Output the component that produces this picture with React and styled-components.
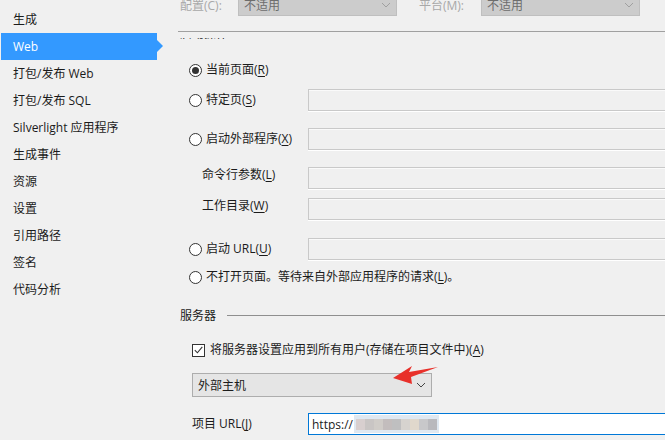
import React from 'react';
import styled, { createGlobalStyle, css } from 'styled-components';

const GlobalStyle = createGlobalStyle`
  html, body { margin: 0; padding: 0; background: #f0f0f0; }
  body {
    font-family: "Open Sans", "Noto Sans CJK SC", sans-serif;
    font-size: 12px;
    color: #1b1b1b;
  }
  u { text-underline-offset: 2px; }
`;

const Window = styled.div`
  position: relative;
  display: flex;
  width: 665px;
  height: 440px;
  overflow: hidden;
  background: #f0f0f0;
`;

const Sidebar = styled.ul`
  flex: none;
  width: 163px;
  margin: 0;
  padding: 6px 0 0;
  list-style: none;
`;

const NavItem = styled.li`
  position: relative;
  box-sizing: border-box;
  width: 156px;
  height: 27px;
  margin-left: 1px;
  padding-left: 12px;
  line-height: 27px;
  white-space: nowrap;
  ${p => p.$active && css`
    background: #3399ff;
    color: #fff;
    &::after {
      content: '';
      position: absolute;
      right: -6px;
      top: 7px;
      border-top: 6px solid transparent;
      border-bottom: 6px solid transparent;
      border-left: 6px solid #3399ff;
    }
  `}
`;

const Main = styled.div`
  flex: 1;
  min-width: 0;
  display: flex;
  flex-direction: column;
`;

const ConfigBar = styled.div`
  display: flex;
  align-items: center;
  height: 22px;
  margin-top: -6px;
  padding-left: 17px;
`;

const ConfigLabel = styled.span`
  flex: none;
  width: ${p => p.$w}px;
  color: #a8a8a8;
`;

const Select = styled.div`
  flex: none;
  box-sizing: border-box;
  display: flex;
  align-items: center;
  justify-content: space-between;
  width: ${p => p.$w}px;
  height: ${p => p.$h || 22}px;
  margin-right: ${p => p.$mr || 0}px;
  padding: 0 5px 0 5px;
  border: 1px solid ${p => (p.$disabled ? '#bfbfbf' : '#adadad')};
  background: ${p => (p.$disabled ? '#cccccc' : '#e5e5e5')};
  color: ${p => (p.$disabled ? '#6d6d6d' : '#1b1b1b')};
`;

const Separator = styled.div`
  height: 1px;
  margin: 15px 0 6px 15px;
  background: #a0a0a0;
`;

const Viewport = styled.div`
  flex: 1;
  overflow: hidden;
`;

const Content = styled.div`
  width: 620px;
  margin-top: -12px;
`;

const GroupLabel = styled.div`
  height: 16px;
  line-height: 16px;
  padding-left: 17px;
`;

const Row = styled.div`
  display: flex;
  align-items: ${p => (p.$top ? 'flex-start' : 'center')};
  height: ${p => p.$h || 22}px;
  margin-top: ${p => p.$mt || 0}px;
  padding-left: ${p => p.$indent}px;
  white-space: nowrap;
`;

const FieldLabel = styled.label`
  flex: none;
  display: flex;
  align-items: center;
  gap: ${p => p.$gap || 4}px;
  width: ${p => (p.$w ? `${p.$w}px` : 'auto')};
  line-height: 16px;
`;

const Radio = styled.span`
  flex: none;
  box-sizing: border-box;
  display: flex;
  align-items: center;
  justify-content: center;
  width: 13px;
  height: 13px;
  border: 1px solid #333;
  border-radius: 50%;
  background: #fff;
  &::after {
    content: '';
    display: ${p => (p.$checked ? 'block' : 'none')};
    width: 7px;
    height: 7px;
    border-radius: 50%;
    background: #333;
  }
`;

const Checkbox = styled.span`
  flex: none;
  box-sizing: border-box;
  display: flex;
  align-items: center;
  justify-content: center;
  width: 13px;
  height: 13px;
  border: 1px solid #333;
  background: #fff;
`;

const TextBox = styled.div`
  flex: 1;
  box-sizing: border-box;
  display: flex;
  align-items: center;
  height: 22px;
  padding-left: 3px;
  border: 1px solid ${p => (p.$focused ? '#0078d7' : '#c9c9c9')};
  background: ${p => (p.$focused ? '#fff' : '#f0f0f0')};
  box-shadow: ${p => (p.$focused ? 'none' : '0 1px 0 #fff, inset 0 1px 0 #fafafa')};
`;

const SectionRow = styled.div`
  display: flex;
  align-items: center;
  height: 20px;
  margin-top: 17px;
  padding-left: 17px;
`;

const SectionLine = styled.div`
  flex: 1;
  height: 1px;
  margin-left: 11px;
  background: #8f8f8f;
`;

const Mosaic = styled.span`
  display: flex;
  align-items: center;
  height: 18px;
  margin-left: 1px;
  padding: 0 2px;
  background: #dfe8f1;
`;

const Tile = styled.span`
  width: 9px;
  height: 11px;
  background: ${p => p.$c};
`;

const Annotation = styled.svg`
  position: absolute;
  left: 0;
  top: 0;
  pointer-events: none;
`;

const Chevron = ({ color = '#444' }) => (
  <svg width="10" height="6" viewBox="0 0 10 6">
    <path d="M1 1 L5 5 L9 1" fill="none" stroke={color} strokeWidth="1" />
  </svg>
);

const navItems = ['生成', 'Web', '打包/发布 Web', '打包/发布 SQL', 'Silverlight 应用程序',
  '生成事件', '资源', '设置', '引用路径', '签名', '代码分析'];

const tiles = ['#d8cfcf', '#c9c5c4', '#d0ccc8', '#c3bdbd', '#bfbfc0', '#d6d3cf', '#e0d8cc', '#c8c8ca', '#b9b9bd'];

export default function App() {
  return (
    <Window>
      <GlobalStyle />
      <Sidebar>
        {navItems.map(item => (
          <NavItem key={item} $active={item === 'Web'}>{item}</NavItem>
        ))}
      </Sidebar>

      <Main>
        <ConfigBar>
          <ConfigLabel $w={58}>配置(C):</ConfigLabel>
          <Select $w={159} $mr={22} $disabled>不适用<Chevron color="#a0a0a0" /></Select>
          <ConfigLabel $w={62}>平台(M):</ConfigLabel>
          <Select $w={159} $disabled>不适用<Chevron color="#a0a0a0" /></Select>
        </ConfigBar>
        <Separator />

        <Viewport>
          <Content>
            <GroupLabel>启动操作</GroupLabel>

            <Row $mt={17} $indent={26}>
              <FieldLabel $w={119}><Radio $checked /><span>当前页面(<u>R</u>)</span></FieldLabel>
            </Row>
            <Row $mt={8} $indent={26}>
              <FieldLabel $w={119}><Radio /><span>特定页(<u>S</u>)</span></FieldLabel>
              <TextBox />
            </Row>
            <Row $mt={17} $indent={26}>
              <FieldLabel $w={119}><Radio /><span>启动外部程序(<u>X</u>)</span></FieldLabel>
              <TextBox />
            </Row>
            <Row $mt={17} $indent={39} $top>
              <FieldLabel $w={106}><span>命令行参数(<u>L</u>)</span></FieldLabel>
              <TextBox />
            </Row>
            <Row $mt={9} $indent={39} $top>
              <FieldLabel $w={106}><span>工作目录(<u>W</u>)</span></FieldLabel>
              <TextBox />
            </Row>
            <Row $mt={18} $indent={26}>
              <FieldLabel $w={119}><Radio /><span>启动 URL(<u>U</u>)</span></FieldLabel>
              <TextBox />
            </Row>
            <Row $mt={6} $indent={26}>
              <FieldLabel><Radio /><span>不打开页面。等待来自外部应用程序的请求(<u>L</u>)。</span></FieldLabel>
            </Row>

            <SectionRow>
              服务器
              <SectionLine />
            </SectionRow>

            <Row $mt={14} $indent={29}>
              <FieldLabel $gap={5}>
                <Checkbox>
                  <svg width="9" height="8" viewBox="0 0 9 8">
                    <path d="M0.8 4.2 L3.4 6.8 L8.3 0.8" fill="none" stroke="#333" strokeWidth="1.1" />
                  </svg>
                </Checkbox>
                <span>将服务器设置应用到所有用户(存储在项目文件中)(<u>A</u>)</span>
              </FieldLabel>
            </Row>

            <Row $mt={12} $h={24} $indent={29}>
              <Select $w={240} $h={24}>外部主机<Chevron /></Select>
            </Row>

            <Row $mt={16} $indent={29}>
              <FieldLabel $w={116}><span>项目 URL(<u>J</u>)</span></FieldLabel>
              <TextBox $focused>
                https://
                <Mosaic>
                  {tiles.map((c, i) => <Tile key={i} $c={c} />)}
                </Mosaic>
              </TextBox>
            </Row>
          </Content>
        </Viewport>
      </Main>

      <Annotation width="665" height="440" viewBox="0 0 665 440">
        <polygon points="393,378 412,366 409,372 438,367 411,377 412,384" fill="#e8302a" />
      </Annotation>
    </Window>
  );
}
